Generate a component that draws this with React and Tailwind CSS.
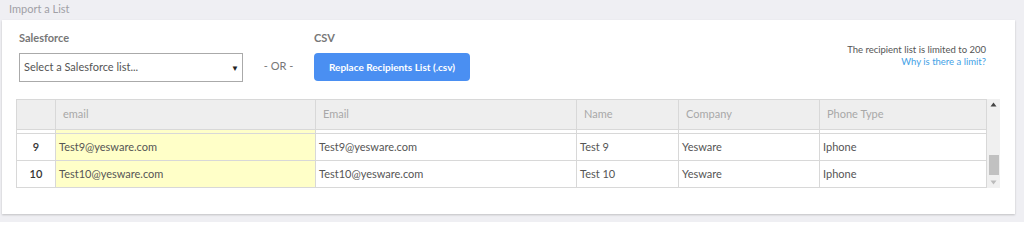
import React from "react";

const cols = [
  { w: "w-[38px]", key: "idx" },
  { w: "w-[260px]", key: "email", label: "email" },
  { w: "w-[261px]", key: "Email", label: "Email" },
  { w: "w-[102px]", key: "name", label: "Name" },
  { w: "w-[141px]", key: "company", label: "Company" },
  { w: "w-[169px]", key: "phone", label: "Phone Type" },
];

const rows = [
  { idx: "9", email: "Test9@yesware.com", Email: "Test9@yesware.com", name: "Test 9", company: "Yesware", phone: "Iphone" },
  { idx: "10", email: "Test10@yesware.com", Email: "Test10@yesware.com", name: "Test 10", company: "Yesware", phone: "Iphone" },
];

export default function App() {
  return (
    <div className="w-[1024px] h-[222px] bg-[#efeff3] overflow-hidden" style={{ fontFamily: "Lato, 'Open Sans', sans-serif" }}>
      <div className="h-[20px] pl-[9px] pt-[1px] text-[11px] leading-[16px] text-[#a0a0a6]">Import a List</div>
      <div className="ml-[2px] w-[1013px] h-[194px] bg-white shadow-[0_1px_2px_rgba(0,0,0,0.2)]">
        <div className="flex pl-[17px] pr-[29px] pt-[11px]">
          <div className="w-[224px]">
            <div className="text-[11px] font-bold leading-[14px] text-[#777]">Salesforce</div>
            <div className="mt-[8px] h-[29px] border border-[#aaa] flex items-center justify-between pl-[4px] pr-[3px]">
              <span className="text-[11px] text-[#555]">Select a Salesforce list...</span>
              <span className="text-[8px] text-[#222]">▼</span>
            </div>
          </div>
          <div className="w-[71px] pt-[27px] text-center text-[11px] text-[#777] leading-[16px]">- OR -</div>
          <div>
            <div className="text-[11px] font-bold leading-[14px] text-[#777]">CSV</div>
            <button className="mt-[8px] h-[28px] w-[156px] rounded-[4px] bg-[#4a8ff2] text-white text-[10px] font-bold">
              Replace Recipients List (.csv)
            </button>
          </div>
          <div className="flex-1 flex flex-col items-end pt-[13px] text-[9.5px] leading-[12px]">
            <div className="text-[#555]">The recipient list is limited to 200</div>
            <div className="text-[#3fa1e6]">Why is there a limit?</div>
          </div>
        </div>
        <div className="ml-[14px] mt-[17px] flex">
          <div className="w-[971px] border-l border-r border-[#d8d8d8]">
            <div className="flex h-[31px] bg-[#eeeeee] border-t border-b border-[#d8d8d8]">
              {cols.map((c, i) => (
                <div key={c.key} className={`${c.w} shrink-0 ${i > 0 ? "border-l border-[#d8d8d8]" : ""} flex items-center pl-[7px] text-[11px] text-[#a8a8a8]`}>
                  {c.label || ""}
                </div>
              ))}
            </div>
            <div className="flex h-[4px] border-b border-[#d8d8d8]">
              {cols.map((c, i) => (
                <div key={c.key} className={`${c.w} shrink-0 ${i > 0 ? "border-l border-[#d8d8d8]" : ""} ${c.key === "email" ? "bg-[#ffffc8]" : ""}`} />
              ))}
            </div>
            {rows.map((r) => (
              <div key={r.idx} className="flex h-[27px] border-b border-[#d8d8d8]">
                {cols.map((c, i) => (
                  <div
                    key={c.key}
                    className={`${c.w} shrink-0 ${i > 0 ? "border-l border-[#d8d8d8]" : ""} ${c.key === "email" ? "bg-[#ffffc8]" : ""} ${c.key === "idx" ? "justify-center font-semibold text-[#333]" : "pl-[3px] text-[#555]"} flex items-center text-[11px]`}
                  >
                    {r[c.key]}
                  </div>
                ))}
              </div>
            ))}
          </div>
          <div className="w-[13px] h-[89px] bg-[#f0f0f0] flex flex-col items-center justify-between py-[3px]">
            <svg width="7" height="5" viewBox="0 0 7 5"><path d="M3.5 0.5 L6.5 4.5 L0.5 4.5 Z" fill="#444" /></svg>
            <div className="flex flex-col items-center gap-[5px]">
              <div className="w-[10px] h-[20px] bg-[#c1c1c1]" />
              <svg width="7" height="5" viewBox="0 0 7 5"><path d="M0.5 0.5 L6.5 0.5 L3.5 4.5 Z" fill="#bbb" /></svg>
            </div>
          </div>
        </div>
      </div>
    </div>
  );
}
